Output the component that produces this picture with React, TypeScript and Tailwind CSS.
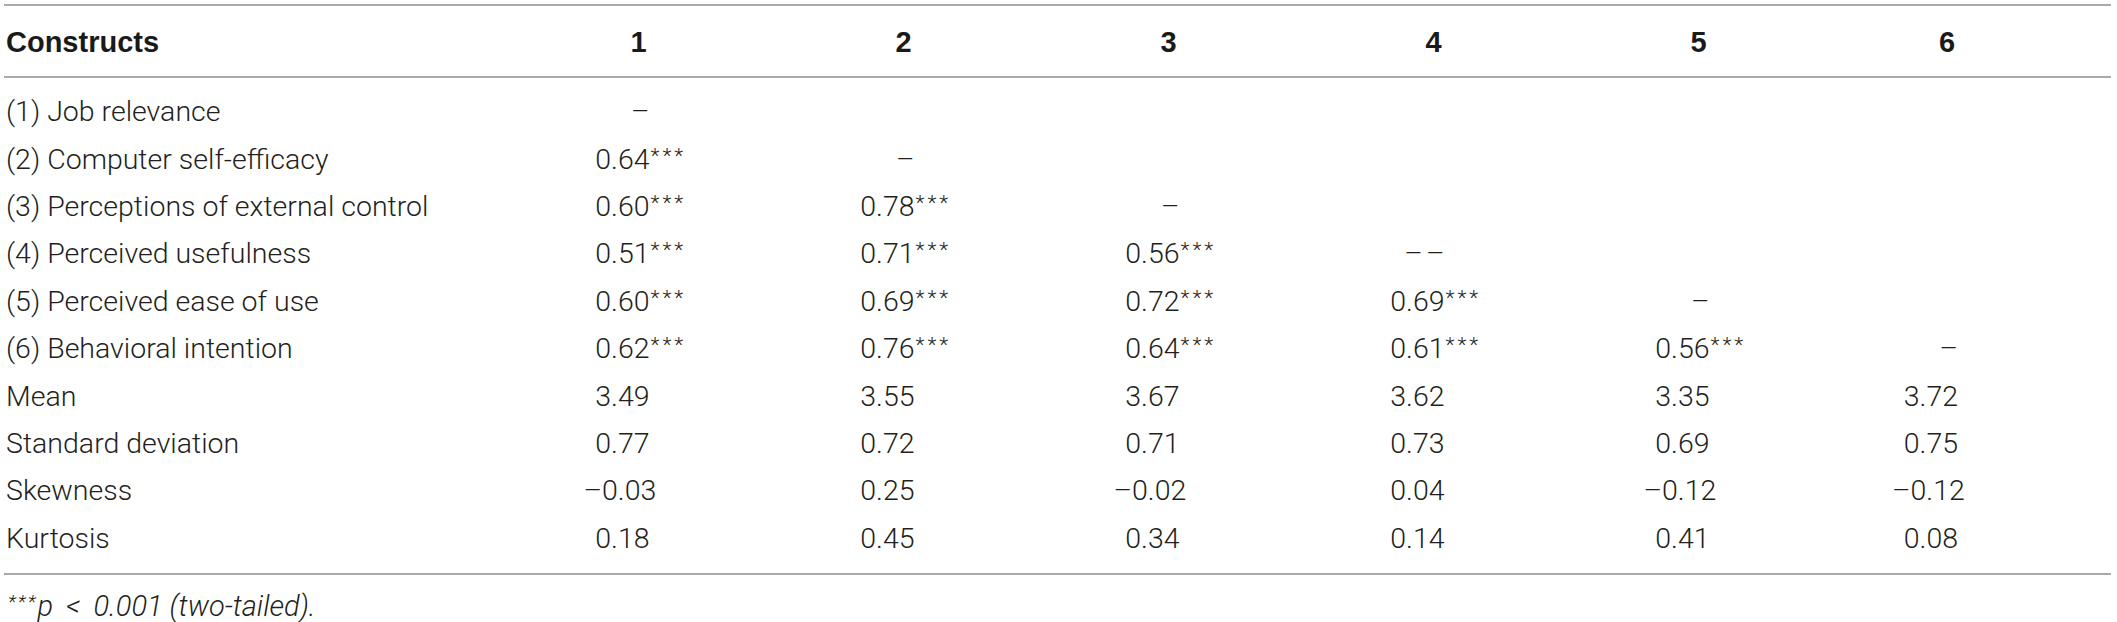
import React from 'react';

type Row = { label: string; vals: string[] };

const rows: Row[] = [
    { label: '(1) Job relevance', vals: ['–', '', '', '', '', ''] },
    { label: '(2) Computer self-efficacy', vals: ['0.64***', '–', '', '', '', ''] },
    { label: '(3) Perceptions of external control', vals: ['0.60***', '0.78***', '–', '', '', ''] },
    { label: '(4) Perceived usefulness', vals: ['0.51***', '0.71***', '0.56***', '– –', '', ''] },
    { label: '(5) Perceived ease of use', vals: ['0.60***', '0.69***', '0.72***', '0.69***', '–', ''] },
    { label: '(6) Behavioral intention', vals: ['0.62***', '0.76***', '0.64***', '0.61***', '0.56***', '–'] },
    { label: 'Mean', vals: ['3.49', '3.55', '3.67', '3.62', '3.35', '3.72'] },
    { label: 'Standard deviation', vals: ['0.77', '0.72', '0.71', '0.73', '0.69', '0.75'] },
    { label: 'Skewness', vals: ['–0.03', '0.25', '–0.02', '0.04', '–0.12', '–0.12'] },
    { label: 'Kurtosis', vals: ['0.18', '0.45', '0.34', '0.14', '0.41', '0.08'] },
];

const gridCols = 'grid grid-cols-[502px_265px_265px_265px_265px_265px_232px_48px]';

// number aligned on its right edge, significance stars hang past it
const Value: React.FC<{ v: string }> = ({ v }) => {
    const stars = v.endsWith('***');
    const num = stars ? v.slice(0, -3) : v;
    return (
        <div className="flex justify-center">
            <div className="w-[110px] pr-[44px] text-right whitespace-nowrap">
                {v === '– –' ? (
                    <span>–<span className="ml-[3px]">–</span></span>
                ) : (
                    <span className="relative">
                        {num}
                        {stars && (
                            <span className="absolute left-full top-[3px] ml-[1px] text-[21px] leading-none tracking-[3px]">
                                ***
                            </span>
                        )}
                    </span>
                )}
            </div>
        </div>
    );
};

export default function App() {
    return (
        <div className="w-[2117px] h-[622px] bg-white pt-[4px] pl-[4px] font-['Roboto','Liberation_Sans',Arial,sans-serif] text-[#231f20]">
            <div className="w-[2107px] border-t-2 border-b-2 border-[#a9a9a9]">
                {/* Header */}
                <div className={`${gridCols} h-[72px] pt-[4px] items-center border-b-2 border-[#a9a9a9] text-[29px] font-bold text-[#1a1a1a] font-['Liberation_Sans',Arial,sans-serif]`}>
                    <div className="pl-[2px]">Constructs</div>
                    {['1', '2', '3', '4', '5', '6'].map((h) => (
                        <div key={h} className="text-center">{h}</div>
                    ))}
                    <div />
                </div>

                {/* Body */}
                <div className="pt-[11px] pb-[10px] text-[28.5px] font-light">
                    {rows.map((r) => (
                        <div key={r.label} className={`${gridCols} h-[47.4px] items-center`}>
                            <div className="pl-[2px] whitespace-nowrap">{r.label}</div>
                            {r.vals.map((v, i) => (
                                <Value key={i} v={v} />
                            ))}
                            <div />
                        </div>
                    ))}
                </div>
            </div>

            <div className="pt-[15px] pl-[4px] text-[29px] font-light italic leading-[32px]">
                <span className="relative -top-[8px] text-[19px] tracking-[2px]">***</span>p<span className="mx-[13px]">&lt;</span>0.001 (two-tailed).
            </div>
        </div>
    );
}
